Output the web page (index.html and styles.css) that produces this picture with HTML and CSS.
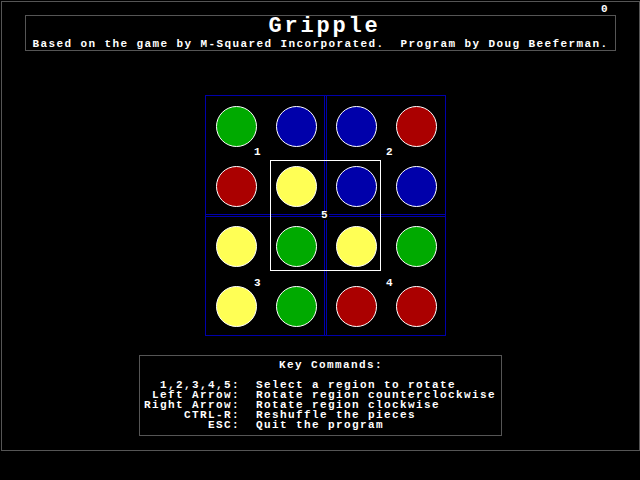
FILE: index.html
```html
<!DOCTYPE html>
<html>
<head>
<meta charset="utf-8">
<title>Gripple</title>
<link rel="stylesheet" href="styles.css">
</head>
<body>
<div class="screen">
  <div class="score">0</div>
  <header class="title-box">
    <h1 class="title">Gripple</h1>
    <p class="subtitle">Based on the game by M-Squared Incorporated.  Program by Doug Beeferman.</p>
  </header>
  <div class="board">
    <div class="grid">
      <span class="disc green"></span><span class="disc blue"></span><span class="disc blue"></span><span class="disc red"></span>
      <span class="disc red"></span><span class="disc yellow"></span><span class="disc blue"></span><span class="disc blue"></span>
      <span class="disc yellow"></span><span class="disc green"></span><span class="disc yellow"></span><span class="disc green"></span>
      <span class="disc yellow"></span><span class="disc green"></span><span class="disc red"></span><span class="disc red"></span>
    </div>
    <div class="vline"></div>
    <div class="hline"></div>
    <div class="select"></div>
    <span class="label l1">1</span>
    <span class="label l2">2</span>
    <span class="label l3">3</span>
    <span class="label l4">4</span>
    <span class="label l5">5</span>
  </div>
  <section class="keys">
    <h2 class="keys-title">Key Commands:</h2>
    <dl class="key-list">
      <dt>1,2,3,4,5:</dt><dd>Select a region to rotate</dd>
      <dt>Left Arrow:</dt><dd>Rotate region counterclockwise</dd>
      <dt>Right Arrow:</dt><dd>Rotate region clockwise</dd>
      <dt>CTRL-R:</dt><dd>Reshuffle the pieces</dd>
      <dt>ESC:</dt><dd>Quit the program</dd>
    </dl>
  </section>
</div>
</body>
</html>
```

FILE: styles.css
```css
html, body {
  margin: 0;
  padding: 0;
  background: #000;
}
body {
  width: 640px;
  height: 480px;
  color: #fff;
  font-family: "Liberation Mono", "DejaVu Sans Mono", monospace;
  font-weight: bold;
  font-size: 11px;
  letter-spacing: 1.4px;
  line-height: 10px;
}
.screen {
  box-sizing: border-box;
  margin: 1px 0 0 1px;
  width: 639px;
  height: 450px;
  border: 1px solid #555;
}
.score {
  margin-top: 2px;
  height: 10px;
  text-align: right;
  padding-right: 30px;
  margin-bottom: 1px;
}
.title-box {
  box-sizing: border-box;
  margin-left: 23px;
  width: 591px;
  height: 36px;
  border: 1px solid #555;
  padding-top: 1px;
}
.title {
  margin: 0 0 2px 0;
  font-size: 22px;
  letter-spacing: 2.8px;
  line-height: 20px;
  height: 20px;
  text-align: center;
  padding-left: 8px;
  font-weight: bold;
}
.subtitle {
  margin: 0;
  height: 10px;
  text-align: center;
  white-space: pre;
}
.board {
  position: relative;
  box-sizing: border-box;
  margin: 44px 0 0 203px;
  width: 241px;
  height: 241px;
  border: 1px solid #0000aa;
}
.grid {
  display: grid;
  grid-template-columns: repeat(4, 60px);
  grid-template-rows: repeat(4, 60px);
  align-items: center;
  justify-items: center;
}
.disc {
  box-sizing: border-box;
  width: 41px;
  height: 41px;
  border-radius: 50%;
  border: 1px solid #fff;
}
.green { background: #00aa00; }
.blue { background: #0000aa; }
.red { background: #aa0000; }
.yellow { background: #ffff55; }
.vline {
  position: absolute;
  top: 0;
  bottom: 0;
  left: 118px;
  width: 1px;
  border-left: 1px solid #0000aa;
  border-right: 1px solid #0000aa;
}
.hline {
  position: absolute;
  left: 0;
  right: 0;
  top: 118px;
  height: 1px;
  border-top: 1px solid #0000aa;
  border-bottom: 1px solid #0000aa;
}
.select {
  position: absolute;
  left: 64px;
  top: 64px;
  width: 109px;
  height: 109px;
  border: 1px solid #fff;
}
.label {
  position: absolute;
  height: 10px;
}
.l1 { left: 48px; top: 51px; }
.l2 { left: 180px; top: 51px; }
.l3 { left: 48px; top: 182px; }
.l4 { left: 180px; top: 182px; }
.l5 { left: 115px; top: 115px; background: #000; height: 9px; line-height: 9px; }
.keys {
  box-sizing: border-box;
  margin: 19px 0 0 137px;
  width: 363px;
  height: 81px;
  border: 1px solid #555;
  padding-top: 4px;
}
.keys-title {
  margin: 0 0 10px 0;
  font-size: 11px;
  height: 10px;
  padding-left: 139px;
}
.key-list {
  margin: 0;
  display: grid;
  grid-template-columns: 100px auto;
  column-gap: 16px;
}
.key-list dt {
  text-align: right;
  height: 10px;
}
.key-list dd {
  margin: 0;
  height: 10px;
}
```
